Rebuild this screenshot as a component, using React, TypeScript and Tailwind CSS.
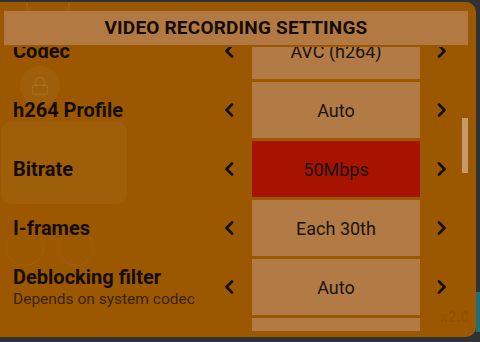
import { Lock } from "lucide-react";

type Row = {
  label: string;
  hint?: string;
  value: string;
  active?: boolean;
};

const rows: Row[] = [
  { label: "Codec", value: "AVC (h264)" },
  { label: "h264 Profile", value: "Auto" },
  { label: "Bitrate", value: "50Mbps", active: true },
  { label: "I-frames", value: "Each 30th" },
  { label: "Deblocking filter", hint: "Depends on system codec", value: "Auto" },
  // next row only peeks in at the bottom edge, its text is out of view
  { label: "", value: "" },
];

function Chevron({ dir }: { dir: "left" | "right" }) {
  return (
    <svg width="10" height="14" viewBox="0 0 10 14" fill="none">
      <polyline
        points={dir === "left" ? "8,1.5 2.5,7 8,12.5" : "2,1.5 7.5,7 2,12.5"}
        stroke="#111"
        strokeWidth="2.6"
        strokeLinecap="round"
        strokeLinejoin="round"
      />
    </svg>
  );
}

export default function App() {
  return (
    <div className="relative w-[480px] h-[342px] overflow-hidden bg-[#2f3335] font-['Roboto',sans-serif]">
      {/* teal bit of the camera ui peeking out at the right */}
      <div className="absolute right-0 top-[292px] w-[4px] h-[40px] bg-[#1f6f74]" />

      <div className="relative mt-[2px] w-[476px] h-[335px] overflow-hidden rounded-r-[10px] bg-[#9b5800] flex flex-col">
        {/* faint camera controls behind the dialog */}
        <div className="absolute -top-[20px] left-[26px] w-[44px] h-[44px] rounded-full border-2 border-white/[0.05]" />
        <div className="absolute top-[64px] left-[20px] w-[40px] h-[40px] rounded-full bg-white/[0.04] flex items-center justify-center">
          <Lock size={20} className="text-white/[0.08]" />
        </div>
        <div className="absolute top-[120px] left-[1px] w-[126px] h-[82px] rounded-[10px] bg-white/[0.035]" />
        <div className="absolute top-[226px] left-[6px] w-[38px] h-[38px] rounded-full border border-white/[0.04]" />
        <div className="absolute top-[228px] left-[58px] w-[36px] h-[36px] rounded-full border border-white/[0.04]" />
        <div className="absolute top-[304px] left-[440px] text-[15px] font-bold text-black/[0.07]">x2.0</div>

        {/* title bar */}
        <div className="relative mt-[9px] ml-[4px] w-[464px] h-[34px] shrink-0 bg-[#b27a42] flex items-center justify-center">
          <span className="text-[19px] font-bold text-[#140c02] tracking-[0.2px]">VIDEO RECORDING SETTINGS</span>
        </div>

        {/* list viewport, scrolled so the codec row is half out of view */}
        <div className="relative mt-[2px] h-[284px] overflow-hidden">
          <div className="-mt-[24px]">
            {rows.map((r, i) => (
              <div key={i} className="flex h-[56px] mb-[3px] items-center">
                <div className="w-[212px] pl-[13px] flex flex-col">
                  <span className="text-[20px] leading-[24px] font-bold text-[#140c02] whitespace-nowrap">{r.label}</span>
                  {r.hint && (
                    <span className="text-[15.5px] leading-[20px] text-[#3a2306] whitespace-nowrap">{r.hint}</span>
                  )}
                </div>
                <div className="w-[40px] pl-[12px] flex items-center">
                  <Chevron dir="left" />
                </div>
                <div
                  className={`w-[168px] h-[56px] flex items-center justify-center text-[18px] text-[#181410] ${
                    r.active ? "bg-[#a81200]" : "bg-[#b27b46]"
                  }`}
                >
                  {r.value}
                </div>
                <div className="w-[40px] pl-[17px] flex items-center">
                  <Chevron dir="right" />
                </div>
              </div>
            ))}
          </div>

          {/* scrollbar */}
          <div className="absolute top-[71px] left-[462px] w-[6px] h-[55px] bg-[#c49b6c]" />
        </div>
      </div>
    </div>
  );
}
